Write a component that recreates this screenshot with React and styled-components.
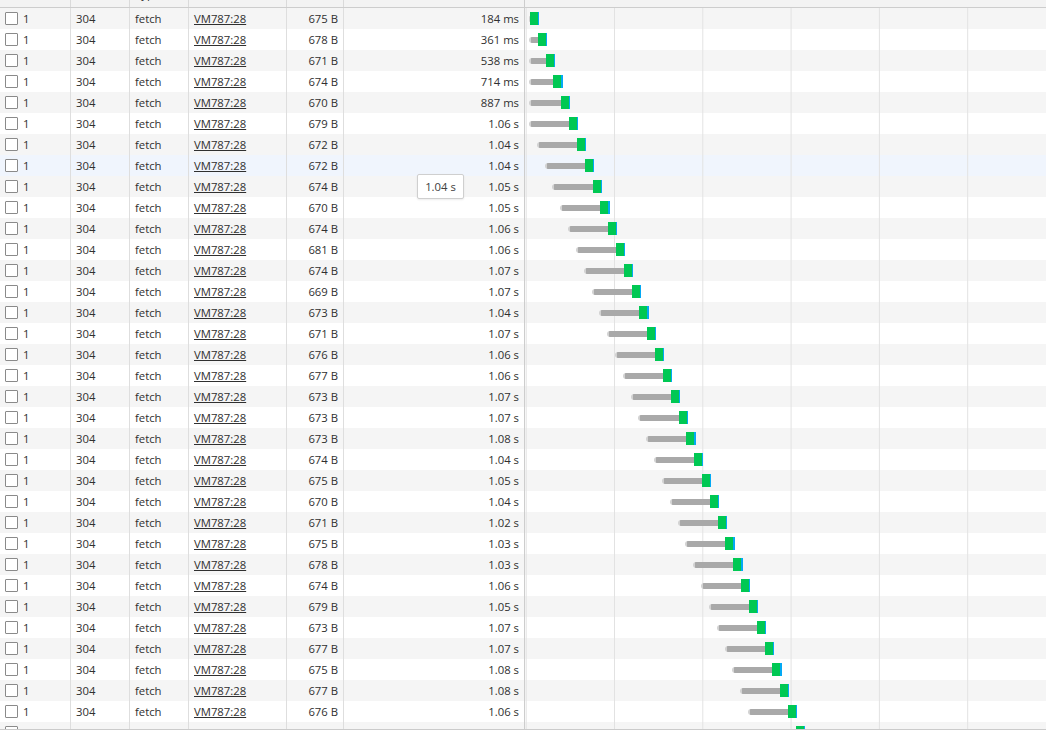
import React from 'react';
import styled, { createGlobalStyle } from 'styled-components';

const GlobalStyle = createGlobalStyle`
  html, body {
    margin: 0;
    padding: 0;
    background: #ffffff;
  }
  body {
    font-family: "Segoe UI", "Open Sans", sans-serif;
    font-size: 11.3px;
    color: #303030;
  }
`;

const COLUMNS = '71px 59px 59px 98px 57px 181px 1fr';

const Panel = styled.div`
  position: relative;
  height: 729px;
  overflow: hidden;
  border-bottom: 1px solid #cbcbcb;
`;

// only the last few pixels of the header are in view (list is scrolled)
const HeaderRow = styled.div`
  display: grid;
  grid-template-columns: ${COLUMNS};
  height: 7px;
  background: #f3f3f3;
  border-bottom: 1px solid #cdcdcd;
  overflow: hidden;
`;

const HeaderCell = styled.div`
  padding: 0 5px;
  border-right: ${props => (props.$last ? 'none' : `1px solid ${props.$strong ? '#cdcdcd' : '#dadada'}`)};
  overflow: hidden;
  white-space: nowrap;
  text-align: ${props => (props.$right ? 'right' : 'left')};
`;

const HeaderLabel = styled.div`
  line-height: 21px;
  margin-top: -17px;
`;

const Row = styled.div`
  display: grid;
  grid-template-columns: ${COLUMNS};
  height: 21px;
  background: ${props => (props.$hover ? '#f0f5fd' : props.$even ? '#f5f5f5' : '#ffffff')};
`;

const Cell = styled.div`
  padding: 0 5px;
  line-height: 21px;
  white-space: nowrap;
  overflow: hidden;
  text-align: ${props => (props.$right ? 'right' : 'left')};
  border-right: 1px solid ${props => (props.$strong ? '#cdcdcd' : '#dedede')};
`;

const NameCell = styled(Cell)`
  display: flex;
  align-items: center;
  gap: 5px;
`;

const Checkbox = styled.span`
  width: 13px;
  height: 13px;
  box-sizing: border-box;
  border: 1px solid #8a8a8a;
  border-radius: 1px;
  background: #ffffff;
  flex: none;
`;

const Link = styled.span`
  text-decoration: underline;
`;

const WaterfallCell = styled.div`
  display: flex;
  align-items: center;
  background-image: linear-gradient(to right, #e2e2e2 1px, transparent 1px);
  background-size: 88.3px 100%;
  background-position: 89px 0;
`;

const Stall = styled.div`
  height: 6px;
  flex: none;
  border-radius: 3px 0 0 3px;
  background: linear-gradient(to right, #d2d2d2 2px, #a9a9a9 2px);
`;

const Wait = styled.div`
  width: 8px;
  height: 13px;
  flex: none;
  background: #00c853;
`;

const Download = styled.div`
  width: 1.2px;
  height: 13px;
  flex: none;
  background: #03a9f4;
`;

const Tooltip = styled.div`
  position: absolute;
  left: 417px;
  top: 174px;
  width: 47px;
  height: 25px;
  box-sizing: border-box;
  display: flex;
  align-items: center;
  justify-content: center;
  background: #ffffff;
  border: 1px solid #cfcfcf;
  border-radius: 2px;
  box-shadow: 0 1px 2px rgba(0, 0, 0, 0.08);
  color: #404040;
`;

const requests = [
  ['675 B', '184 ms'], ['678 B', '361 ms'], ['671 B', '538 ms'], ['674 B', '714 ms'],
  ['670 B', '887 ms'], ['679 B', '1.06 s'], ['672 B', '1.04 s'], ['672 B', '1.04 s'],
  ['674 B', '1.05 s'], ['670 B', '1.05 s'], ['674 B', '1.06 s'], ['681 B', '1.06 s'],
  ['674 B', '1.07 s'], ['669 B', '1.07 s'], ['673 B', '1.04 s'], ['671 B', '1.07 s'],
  ['676 B', '1.06 s'], ['677 B', '1.06 s'], ['673 B', '1.07 s'], ['673 B', '1.07 s'],
  ['673 B', '1.08 s'], ['674 B', '1.04 s'], ['675 B', '1.05 s'], ['670 B', '1.04 s'],
  ['671 B', '1.02 s'], ['675 B', '1.03 s'], ['678 B', '1.03 s'], ['674 B', '1.06 s'],
  ['679 B', '1.05 s'], ['673 B', '1.07 s'], ['677 B', '1.07 s'], ['675 B', '1.08 s'],
  ['677 B', '1.08 s'], ['676 B', '1.06 s'], ['673 B', '1.06 s'],
];

const STEP = 7.82;
const HOVER_ROW = 7;

const headers = [
  { label: 'Name' },
  { label: 'Status' },
  { label: 'Type' },
  { label: 'Initiator' },
  { label: 'Size', right: true },
  { label: 'Time', right: true, strong: true },
  { label: 'Waterfall', last: true },
];

export default function App() {
  return (
    <>
      <GlobalStyle />
      <Panel>
        <HeaderRow>
          {headers.map(h => (
            <HeaderCell key={h.label} $right={h.right} $strong={h.strong} $last={h.last}>
              <HeaderLabel>{h.label}</HeaderLabel>
            </HeaderCell>
          ))}
        </HeaderRow>

        {requests.map(([size, time], i) => {
          const start = 4 + STEP * Math.max(0, i - 5);
          const waitStart = 5 + STEP * i;
          return (
            <Row key={i} $even={i % 2 === 0} $hover={i === HOVER_ROW}>
              <NameCell>
                <Checkbox />
                1
              </NameCell>
              <Cell>304</Cell>
              <Cell>fetch</Cell>
              <Cell><Link>VM787:28</Link></Cell>
              <Cell $right>{size}</Cell>
              <Cell $right $strong>{time}</Cell>
              <WaterfallCell style={{ paddingLeft: start }}>
                <Stall style={{ width: Math.max(1, waitStart - start) }} />
                <Wait />
                <Download />
              </WaterfallCell>
            </Row>
          );
        })}

        <Tooltip>1.04 s</Tooltip>
      </Panel>
    </>
  );
}
